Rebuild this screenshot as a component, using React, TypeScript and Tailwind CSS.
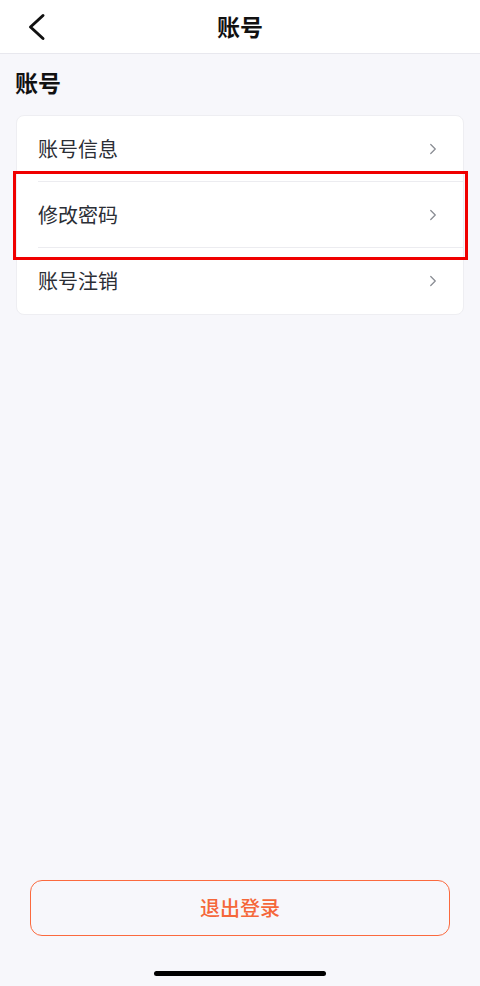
import { ChevronRight } from 'lucide-react'

const font = { fontFamily: '"Noto Sans CJK SC", "Noto Sans", sans-serif' }

const rows = ['账号信息', '修改密码', '账号注销']

export default function App() {
  return (
    <div className="relative flex h-[986px] w-[480px] flex-col bg-[#f7f7fb]" style={font}>
      {/* header */}
      <div className="relative flex h-[54px] items-center justify-center border-b border-[#e8e8ee] bg-white">
        <button className="absolute left-[26px] top-[13px]">
          <svg width="20" height="28" viewBox="0 0 20 28" fill="none">
            <path d="M17 2.5 L4.5 14 L17 25.5" stroke="#111" strokeWidth="3" strokeLinecap="round" strokeLinejoin="round" />
          </svg>
        </button>
        <h1 className="text-[23px] font-bold text-[#111]">账号</h1>
      </div>

      <div className="px-4">
        <h2 className="-ml-px mt-[12px] text-[23px] font-bold leading-[32px] text-[#111]">账号</h2>

        <div className="mt-[17px] overflow-hidden rounded-lg border border-[#eeeef2] bg-white">
          {rows.map((label, i) => (
            <div key={label} className="pl-[21px]">
              <div
                className={`flex h-[66px] items-center justify-between pr-[21px] ${
                  i < rows.length - 1 ? 'border-b border-[#ececf0]' : ''
                }`}
              >
                <span className="text-[20px] text-[#2b2e35]">{label}</span>
                <ChevronRight className="h-[18px] w-[18px] text-[#8a8d94]" strokeWidth={1.75} />
              </div>
            </div>
          ))}
        </div>
      </div>

      {/* annotation */}
      <div className="pointer-events-none absolute left-[13px] top-[171px] h-[89px] w-[455px] border-[3px] border-[#f00000]" />

      <div className="mt-auto px-[30px]">
        <button className="flex h-[56px] w-full items-center justify-center rounded-xl border border-[#fb6a3e] text-[20px] font-medium text-[#f5673a]">
          退出登录
        </button>
      </div>
      <div className="flex h-[50px] items-end justify-center pb-[10px]">
        <div className="h-[5px] w-[172px] rounded-full bg-black" />
      </div>
    </div>
  )
}
